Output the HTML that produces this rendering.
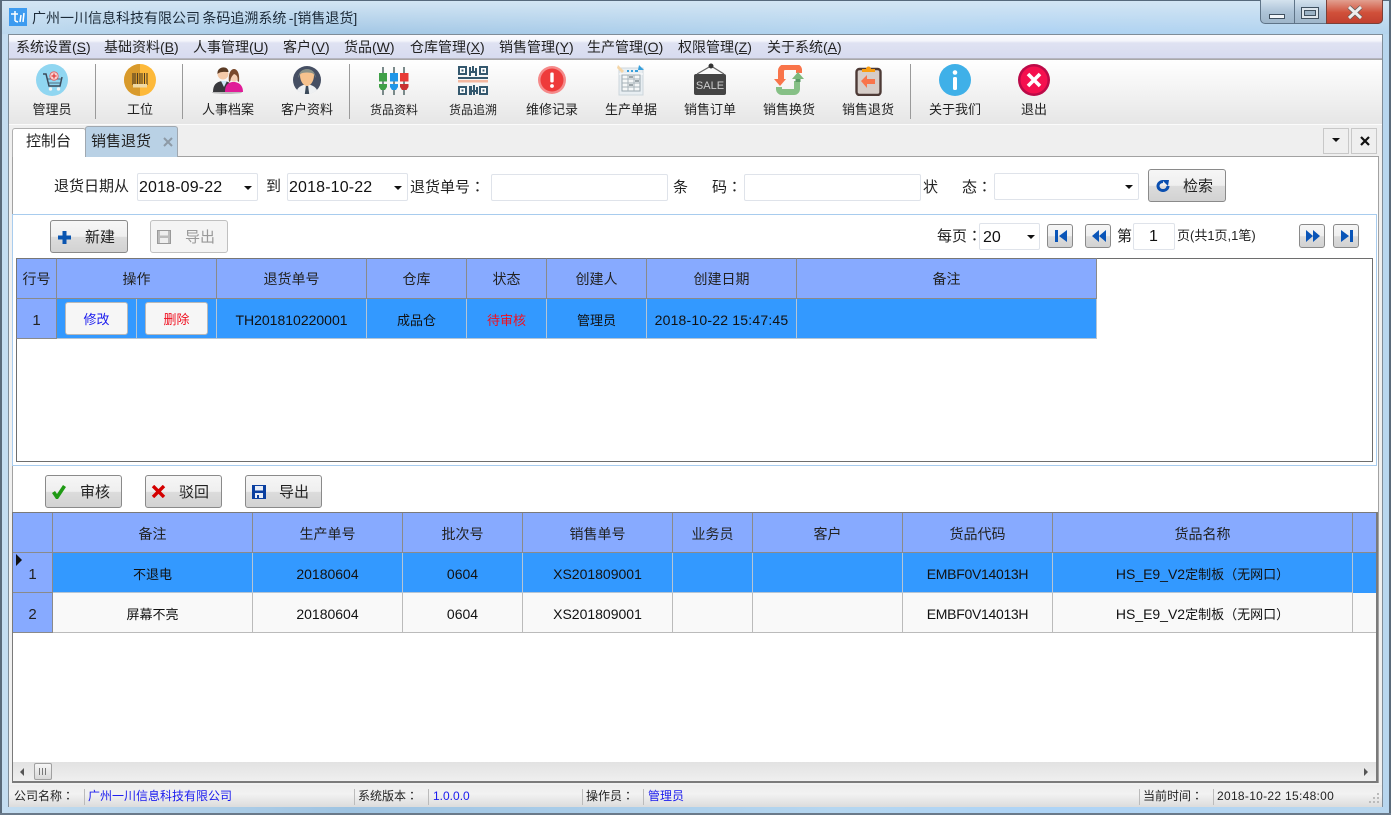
<!DOCTYPE html>
<html lang="zh-CN"><head><meta charset="utf-8"><title>销售退货</title>
<style>
html,body{margin:0;padding:0}
body{width:1391px;height:815px;overflow:hidden;position:relative;background:#b4d4ee;font-family:"Liberation Sans","Noto Sans CJK SC",sans-serif;font-size:14px;color:#111}
div,svg{position:absolute;box-sizing:border-box}
.q{font-family:"Noto Sans CJK TC",sans-serif;line-height:0}
.t{white-space:nowrap;line-height:20px;height:20px}
.c{text-align:center}
.f15{font-size:15px}
.m{font-size:14px;top:37px;color:#222}
.m u{text-decoration:underline}
.lb{top:100px;font-size:13px;width:80px;text-align:center;color:#222}
.sep{width:1px;top:64px;height:55px;background:#9a9a9a}
.inp{background:#fff;border:1px solid #dfe3ea;border-radius:2px}
.arr{width:0;height:0;border-left:4px solid transparent;border-right:4px solid transparent;border-top:4px solid #111}
.btn{border:1px solid #8a8a8a;border-radius:3px;background:linear-gradient(#f6f6f6 0,#efefef 50%,#dcdcdc 52%,#d2d2d2 100%)}
.btn.dis{border-color:#c0c0c0;background:#f4f4f4}
.cell{border-right:1px solid #8a8a8a;border-bottom:1px solid #8a8a8a;text-align:center;line-height:43px;font-size:14px;white-space:nowrap}
.h{background:#87aaff;color:#222}
.gh{line-height:41px;border-top:1px solid #777}
.s{background:#3399ff;border-right-color:#b5c5d5;border-bottom-color:#b5c5d5}
.w{background:#f9f9f9;border-right-color:#bbb;border-bottom-color:#bbb}
.z{font-size:13px}
.st{top:786px;font-size:12px;color:#222}
.stb{color:#1a1aee}
.sd{top:789px;width:1px;height:16px;background:#bbb}
</style></head><body>

<!-- window frame -->
<div style="left:0;top:0;width:1391px;height:815px;background:linear-gradient(90deg,#c4ddf0 0,#9fc4e2 25%,#b5d6f0 60%,#aed4f6 75%,#b8d6ee 100%)"></div>
<div style="left:0;top:0;width:1391px;height:34px;background:linear-gradient(#d4e6f4,rgba(170,205,235,0.3))"></div>
<div style="left:0;top:0;width:2px;height:815px;background:#5a6a7a"></div>
<div style="left:1389px;top:0;width:2px;height:815px;background:#5a6a7a"></div>
<div style="left:0;top:813px;width:1391px;height:2px;background:#6a7a8a"></div>
<div style="left:0;top:0;width:1391px;height:1px;background:#56697c"></div>

<!-- app icon + title -->
<div style="left:9px;top:8px;width:18px;height:18px;background:#3d9bf0"></div>
<svg style="left:9px;top:8px" width="18" height="18" viewBox="0 0 18 18"><path d="M2 6h7M6 3v10M6 13l3 1M12 7l-1 7M15 5l-1 9" stroke="#fff" stroke-width="1.500" fill="none"/></svg>
<div class="t" style="left:32px;top:8px;font-size:14px;color:#1c2a38;word-spacing:-1.500px">广州一川信息科技有限公司 条码追溯系统 -[销售退货]</div>

<!-- window buttons -->
<div style="left:1260px;top:0;width:123px;height:24px;border:1px solid #5f7488;border-top:0;border-radius:0 0 5px 5px;background:linear-gradient(#d4e2ee,#aec4d8 50%,#9fb6ca)"></div>
<div style="left:1294px;top:0;width:1px;height:23px;background:#5f7488"></div>
<div style="left:1326px;top:0;width:57px;height:24px;border:1px solid #7a4038;border-top:0;border-radius:0 0 5px 0;background:linear-gradient(#e2a090,#d0503a 55%,#c24030)"></div>
<div style="left:1269px;top:14px;width:16px;height:5px;background:#f2f6fa;border:1px solid #3f5060"></div>
<div style="left:1301px;top:7px;width:18px;height:12px;background:#dde6ee;border:1px solid #3f5060"></div>
<div style="left:1304px;top:10px;width:12px;height:6px;background:#9ab2c6;border:1px solid #3f5060"></div>
<svg style="left:1346px;top:5px" width="18" height="15" viewBox="0 0 18 15"><path d="M3 2l12 11M15 2L3 13" stroke="#5a5a5a" stroke-width="4.500"/><path d="M3 2l12 11M15 2L3 13" stroke="#eeeeee" stroke-width="3"/></svg>

<!-- client -->
<div style="left:8px;top:34px;width:1375px;height:773px;background:#f0f0f0;border:1px solid #7f8c98;border-bottom:0"></div>

<!-- menu -->
<div style="left:9px;top:35px;width:1373px;height:24px;background:linear-gradient(#fbfbfe 0,#f4f5fb 25%,#dfe2f2 35%,#d7dbef 100%);border-bottom:1px solid #b5b5c0"></div>
<div class="t m" style="left:16px">系统设置(<u>S</u>)</div>
<div class="t m" style="left:104px">基础资料(<u>B</u>)</div>
<div class="t m" style="left:193px">人事管理(<u>U</u>)</div>
<div class="t m" style="left:283px">客户(<u>V</u>)</div>
<div class="t m" style="left:344px">货品(<u>W</u>)</div>
<div class="t m" style="left:410px">仓库管理(<u>X</u>)</div>
<div class="t m" style="left:499px">销售管理(<u>Y</u>)</div>
<div class="t m" style="left:587px">生产管理(<u>O</u>)</div>
<div class="t m" style="left:678px">权限管理(<u>Z</u>)</div>
<div class="t m" style="left:767px">关于系统(<u>A</u>)</div>

<!-- toolbar -->
<div style="left:9px;top:59px;width:1373px;height:66px;background:linear-gradient(#fff,#f5f5f5 40%,#e6e6e6);border-top:1px solid #a8a8a8;border-bottom:1px solid #fbfbfb"></div>
<div class="sep" style="left:95px"></div><div class="sep" style="left:182px"></div><div class="sep" style="left:349px"></div><div class="sep" style="left:910px"></div>

<svg style="left:36px;top:64px" width="32" height="32" viewBox="0 0 32 32"><circle cx="16" cy="16" r="16" fill="#90d6f1"/><path d="M7 10h3l3 12h11l2-9" fill="none" stroke="#3b4a5a" stroke-width="1.500"/><path d="M11.500 15h14M12.500 19h12" stroke="#3b4a5a" stroke-width="0.800"/><circle cx="18" cy="12" r="4.200" fill="#f6d4d4" stroke="#e65a5a" stroke-width="0.800"/><path d="M15.500 12h5M18 9.500v5" stroke="#e03c3c" stroke-width="1.300"/><circle cx="14.500" cy="25" r="1.700" fill="#f2f2f2"/><circle cx="22.500" cy="25" r="1.700" fill="#f2f2f2"/></svg>
<svg style="left:124px;top:64px" width="32" height="32" viewBox="0 0 32 32"><circle cx="16" cy="16" r="16" fill="#fdb93a"/><path d="M16 0a16 16 0 0 0 0 32z" fill="#d89a2c"/><path d="M9 9v12M11 9v12M13.500 9v12M16 9v12M18 9v12M20.500 9v12M23 9v12" stroke="#4e3c22" stroke-width="1.100"/><rect x="9" y="20" width="14" height="3.500" fill="#efd9a5"/></svg>
<svg style="left:212px;top:66px" width="32" height="28" viewBox="0 0 32 28"><ellipse cx="15" cy="26.500" rx="15" ry="1.500" fill="#bbb"/><path d="M1 26c0-7 3-10 9-11h3c5 1 8 4 9 11z" fill="#39393d"/><path d="M9 15l3 6 3-6z" fill="#cfe6f6"/><circle cx="11" cy="8" r="5.500" fill="#f4c9a8"/><path d="M5.500 8c-1-8 11-9 11-2-3 0-8-1-11 2z" fill="#5b3b24"/><path d="M13 26c0-6 2-9 7-10h3c5 1 8 4 8 10z" fill="#e01c98"/><ellipse cx="22" cy="10.500" rx="4.300" ry="5.200" fill="#f6d0b4"/><path d="M17 16c-1-9 2-13 5-13s6 4 5 13l-1.500-1c.5-3 0-6-3.500-7-2 2-3.500 4-3.500 7z" fill="#7a4a2c"/></svg>
<svg style="left:293px;top:66px" width="28" height="28" viewBox="0 0 28 28"><circle cx="14" cy="14" r="14" fill="#464f63"/><path d="M4 24c2-4 6-5 10-6 4 1 8 2 10 6a14 14 0 0 1-20 0z" fill="#eef0f2"/><path d="M13 19h2l1.200 9h-4.400z" fill="#3c4a5a"/><path d="M7 9c0 7 4 11 7 11s7-4 7-11c0-4-14-4-14 0z" fill="#f6c28e"/><path d="M5.500 12C5 0 23 0 22.500 12L21 8c-3-2-11-2-14 0z" fill="#8a9188"/></svg>
<svg style="left:378px;top:65px" width="32" height="30" viewBox="0 0 32 30"><g fill="none" stroke="#7a8a8a" stroke-width="2"><path d="M5 2v28M16 2v28M26 2v28"/></g><rect x="1" y="8" width="8" height="8.500" fill="#3fa047"/><rect x="12" y="8" width="8" height="8.500" fill="#1e96e8"/><rect x="22" y="8" width="8.500" height="8.500" fill="#e83a36"/><path d="M1 19h8v3l-2 3H3l-2-3z" fill="#3fa047"/><path d="M12 19h8v3l-2 3h-4l-2-3z" fill="#1e96e8"/><path d="M22 19h8.500v3l-2 3h-4.500l-2-3z" fill="#c93230"/></svg>
<svg style="left:458px;top:66px" width="30" height="29" viewBox="0 0 30 29"><g fill="#34586e"><path d="M0 0h9v9H0zM21 0h9v9h-9zM0 20h9v9H0zM21 20h9v9h-9z"/><path d="M11 1h2v9h-2zM14 0h2v5h-2zM17 2h2v8h-2zM12 5h6v2h-6zM0 11h30v2H0zM11 20h3v9h-3zM15 19h2v10h-2zM18 21h2v7h-2zM12 24h6v2h-6z"/></g><path d="M2 2h5v5H2zM23 2h5v5h-5zM2 22h5v5H2zM23 22h5v5h-5z" fill="#fff"/><path d="M0 14h30v2.500H0z" fill="#f4b8a0"/><path d="M3.500 3.500h2v2h-2zM24.500 3.500h2v2h-2zM3.500 23.500h2v2h-2zM24.500 23.500h2v2h-2z" fill="#34586e"/></svg>
<svg style="left:538px;top:66px" width="28" height="28" viewBox="0 0 28 28"><circle cx="14" cy="14" r="14" fill="#f58a8a"/><circle cx="14" cy="14" r="11.500" fill="#ee3b3b"/><rect x="12.300" y="6.500" width="3.400" height="10" rx="1.200" fill="#fff"/><circle cx="14" cy="20" r="1.900" fill="#fff"/></svg>
<svg style="left:617px;top:64px" width="28" height="32" viewBox="0 0 28 32"><rect x="2" y="4" width="24" height="27" fill="#e8eef2" stroke="#cdd6dc"/><path d="M2 10h24" stroke="#fff"/><rect x="5" y="11" width="18" height="16" fill="#f6f8f8" stroke="#9aa8b0"/><path d="M5 15h18M5 19h18M5 23h18M11 11v16M17 11v16" stroke="#a8b4ba"/><path d="M12 13h4M12 21h4M18 17h4" stroke="#68757c" stroke-width="1.200"/><path d="M1 1l6 6-2 2-5-5z" fill="#f4d6a8"/><path d="M10 7h2M14 7h2M18 7h3" stroke="#38a0dc" stroke-width="2"/><path d="M22 1l5 5-6 0z" fill="#38a0dc"/></svg>
<svg style="left:694px;top:63px" width="32" height="33" viewBox="0 0 32 33"><rect x="0" y="11" width="32" height="21" rx="2" fill="#444"/><path d="M3 11L17 3l13 8" fill="none" stroke="#666" stroke-width="1.200"/><circle cx="17" cy="3" r="2.500" fill="#333"/><text x="16" y="26" font-family="Liberation Sans,sans-serif" font-size="11" fill="#ccc" text-anchor="middle">SALE</text></svg>
<svg style="left:774px;top:65px" width="30" height="30" viewBox="0 0 30 30"><path d="M7 14V6a4 4 0 0 1 4-4h11a3 3 0 0 1 3 3v3" fill="none" stroke="#f9744a" stroke-width="6"/><path d="M23 16v8a3 3 0 0 1-3 3H8a3 3 0 0 1-3-3v-2" fill="none" stroke="#86c086" stroke-width="6"/><path d="M0 14h12l-6 7z" fill="#f9744a"/><path d="M18 14h12l-6-7z" fill="#7cb87c"/><rect x="21.500" y="14" width="5" height="3" fill="#5a9a64"/></svg>
<svg style="left:855px;top:64px" width="27" height="32" viewBox="0 0 27 32"><rect x="1.500" y="5" width="24" height="26" rx="3" fill="#d6cdc8" stroke="#4d3a36" stroke-width="2.400"/><path d="M7 8V5h4a2.500 2.500 0 0 1 5 0h4v3z" fill="#fa9e10"/><path d="M6 17l6-6v4h8v5h-8v4z" fill="#f9744a"/></svg>
<svg style="left:939px;top:64px" width="32" height="32" viewBox="0 0 32 32"><circle cx="16" cy="16" r="16" fill="#3fb0e8"/><circle cx="16" cy="8.500" r="2.300" fill="#fff"/><rect x="14" y="13" width="4" height="13" rx="1.500" fill="#fff"/></svg>
<svg style="left:1018px;top:64px" width="32" height="32" viewBox="0 0 32 32"><circle cx="16" cy="16" r="16" fill="#bb0a48"/><circle cx="16" cy="16" r="13.500" fill="#f5104f"/><path d="M10 10l12 12M22 10L10 22" stroke="#fff" stroke-width="3.600"/></svg>

<div class="t lb" style="left:12px">管理员</div>
<div class="t lb" style="left:100px">工位</div>
<div class="t lb" style="left:188px">人事档案</div>
<div class="t lb" style="left:267px">客户资料</div>
<div class="t lb" style="left:354px;font-size:12px">货品资料</div>
<div class="t lb" style="left:433px;font-size:12px">货品追溯</div>
<div class="t lb" style="left:512px">维修记录</div>
<div class="t lb" style="left:591px">生产单据</div>
<div class="t lb" style="left:670px">销售订单</div>
<div class="t lb" style="left:749px">销售换货</div>
<div class="t lb" style="left:828px">销售退货</div>
<div class="t lb" style="left:915px">关于我们</div>
<div class="t lb" style="left:994px">退出</div>

<!-- tabs -->
<div style="left:9px;top:125px;width:1373px;height:32px;background:#efefef"></div>
<div style="left:12px;top:156px;width:1367px;height:627px;background:#fff;border:1px solid #a2a2a2"></div>
<div style="left:12px;top:128px;width:74px;height:29px;background:#fff;border:1px solid #b0b0b0;border-bottom:0;border-radius:3px 3px 0 0"></div>
<div class="t f15" style="left:26px;top:132px;color:#222">控制台</div>
<div style="left:85px;top:126px;width:93px;height:31px;background:#b9d1e5;border:1px solid #a0a8b0;border-bottom:0;border-radius:3px 3px 0 0"></div>
<div class="t f15" style="left:91px;top:132px;color:#222">销售退货</div>
<svg style="left:163px;top:137px" width="10" height="10" viewBox="0 0 10 10"><path d="M1 1l8 8M9 1L1 9" stroke="#8d9aa6" stroke-width="2"/></svg>
<div style="left:1323px;top:128px;width:26px;height:26px;border:1px solid #c8c8c8"></div>
<div class="arr" style="left:1332px;top:138px"></div>
<div style="left:1351px;top:128px;width:26px;height:26px;border:1px solid #c8c8c8"></div>
<svg style="left:1360px;top:136px" width="10" height="10" viewBox="0 0 10 10"><path d="M1 1l8 8M9 1L1 9" stroke="#111" stroke-width="2.200"/></svg>

<!-- search row -->
<div class="t f15" style="left:54px;top:177px;color:#222">退货日期从</div>
<div class="inp" style="left:137px;top:173px;width:121px;height:28px"></div>
<div class="t" style="left:139px;top:178px;font-size:16px;letter-spacing:.15px">2018-09-22</div>
<div class="arr" style="left:244px;top:186px"></div>
<div class="t f15" style="left:266px;top:177px;color:#222">到</div>
<div class="inp" style="left:287px;top:173px;width:121px;height:28px"></div>
<div class="t" style="left:289px;top:178px;font-size:16px;letter-spacing:.15px">2018-10-22</div>
<div class="arr" style="left:394px;top:186px"></div>
<div class="t f15" style="left:410px;top:178px;color:#222">退货单号<span class="q" lang="zh-TW">：</span></div>
<div class="inp" style="left:491px;top:174px;width:177px;height:27px"></div>
<div class="t f15" style="left:673px;top:178px;color:#222">条</div>
<div class="t f15" style="left:712px;top:178px;color:#222">码<span class="q" lang="zh-TW">：</span></div>
<div class="inp" style="left:744px;top:174px;width:177px;height:27px"></div>
<div class="t f15" style="left:923px;top:178px;color:#222">状</div>
<div class="t f15" style="left:962px;top:178px;color:#222">态<span class="q" lang="zh-TW">：</span></div>
<div class="inp" style="left:994px;top:173px;width:145px;height:27px"></div>
<div class="arr" style="left:1125px;top:185px"></div>
<div class="btn" style="left:1148px;top:169px;width:78px;height:33px"></div>
<svg style="left:1155px;top:180px" width="15" height="12" viewBox="0 0 15 12"><path d="M13 6A5 4.500 0 1 1 8 1.500" fill="none" stroke="#0a4fb0" stroke-width="3"/><path d="M7 0l7 0-1 6z" fill="#0a4fb0"/></svg>
<div class="t f15" style="left:1183px;top:177px;color:#222">检索</div>

<!-- group 1 -->
<div style="left:12px;top:214px;width:1365px;height:252px;border:1px solid #a8ccee"></div>
<div class="btn" style="left:50px;top:220px;width:78px;height:33px"></div>
<svg style="left:58px;top:231px" width="13" height="13" viewBox="0 0 13 13"><path d="M4.500 0h4v4.500H13v4H8.500V13h-4V8.500H0v-4h4.500z" fill="#0a55b0"/></svg>
<div class="t f15" style="left:85px;top:228px;color:#222">新建</div>
<div class="btn dis" style="left:150px;top:220px;width:78px;height:33px"></div>
<svg style="left:157px;top:230px" width="14" height="14" viewBox="0 0 14 14"><rect x=".5" y=".5" width="13" height="13" fill="#bbb" stroke="#999"/><rect x="3" y="1" width="8" height="4.500" fill="#eee"/><rect x="3" y="8" width="8" height="5" fill="#eee"/></svg>
<div class="t f15" style="left:185px;top:228px;color:#999">导出</div>

<div class="t f15" style="left:937px;top:227px;color:#222">每页<span class="q" lang="zh-TW">：</span></div>
<div class="inp" style="left:979px;top:223px;width:61px;height:27px"></div>
<div class="t" style="left:983px;top:228px;font-size:16px">20</div>
<div class="arr" style="left:1027px;top:235px"></div>
<div class="btn" style="left:1047px;top:224px;width:26px;height:24px"></div>
<svg style="left:1055px;top:230px" width="12" height="12" viewBox="0 0 12 12"><path d="M0 0h3v12H0zM12 0v12L4 6z" fill="#0a55b8"/></svg>
<div class="btn" style="left:1085px;top:224px;width:26px;height:24px"></div>
<svg style="left:1092px;top:230px" width="14" height="12" viewBox="0 0 14 12"><path d="M7 0v12L0 6zM14 0v12L7 6z" fill="#0a55b8"/></svg>
<div class="t f15" style="left:1117px;top:227px;color:#222">第</div>
<div class="inp" style="left:1133px;top:223px;width:42px;height:27px"></div>
<div class="t c" style="left:1133px;top:227px;width:41px;font-size:16px">1</div>
<div class="t" style="left:1177px;top:226px;font-size:13px;color:#222">页(共1页,1笔)</div>
<div class="btn" style="left:1299px;top:224px;width:26px;height:24px"></div>
<svg style="left:1306px;top:230px" width="14" height="12" viewBox="0 0 14 12"><path d="M0 0v12l7-6zM7 0v12l7-6z" fill="#0a55b8"/></svg>
<div class="btn" style="left:1333px;top:224px;width:26px;height:24px"></div>
<svg style="left:1341px;top:230px" width="12" height="12" viewBox="0 0 12 12"><path d="M0 0v12l8-6zM9 0h3v12H9z" fill="#0a55b8"/></svg>

<!-- grid 1 -->
<div style="left:16px;top:258px;width:1357px;height:204px;background:#fff;border:1px solid #6e6e6e"></div>
<div class="cell h gh" style="left:16px;top:258px;width:41px;height:41px;border-left:1px solid #777">行号</div>
<div class="cell h gh" style="left:57px;top:258px;width:160px;height:41px">操作</div>
<div class="cell h gh" style="left:217px;top:258px;width:150px;height:41px">退货单号</div>
<div class="cell h gh" style="left:367px;top:258px;width:100px;height:41px">仓库</div>
<div class="cell h gh" style="left:467px;top:258px;width:80px;height:41px">状态</div>
<div class="cell h gh" style="left:547px;top:258px;width:100px;height:41px">创建人</div>
<div class="cell h gh" style="left:647px;top:258px;width:150px;height:41px">创建日期</div>
<div class="cell h gh" style="left:797px;top:258px;width:300px;height:41px">备注</div>

<div class="cell h" style="left:16px;top:299px;width:41px;height:40px;border-left:1px solid #777;font-size:15px">1</div>
<div class="cell s" style="left:57px;top:299px;width:80px;height:40px"></div>
<div class="cell s" style="left:137px;top:299px;width:80px;height:40px"></div>
<div style="left:65px;top:302px;width:63px;height:33px;background:#f6f6f6;border:1px solid #b8b8b8;border-radius:3px;text-align:center;line-height:33px;font-size:13px;color:#1a1aee">修改</div>
<div style="left:145px;top:302px;width:63px;height:33px;background:#f6f6f6;border:1px solid #b8b8b8;border-radius:3px;text-align:center;line-height:33px;font-size:13px;color:#f01020">删除</div>
<div class="cell s" style="left:217px;top:299px;width:150px;height:40px">TH201810220001</div>
<div class="cell s z" style="left:367px;top:299px;width:100px;height:40px">成品仓</div>
<div class="cell s z" style="left:467px;top:299px;width:80px;height:40px;color:#f01020">待审核</div>
<div class="cell s z" style="left:547px;top:299px;width:100px;height:40px">管理员</div>
<div class="cell s" style="left:647px;top:299px;width:150px;height:40px;letter-spacing:.2px">2018-10-22 15:47:45</div>
<div class="cell s" style="left:797px;top:299px;width:300px;height:40px"></div>

<!-- buttons 2 -->
<div class="btn" style="left:45px;top:475px;width:77px;height:33px"></div>
<svg style="left:51px;top:485px" width="15" height="14" viewBox="0 0 15 14"><path d="M1 8l3-2 2 3 6-9 3 2-8 12H5z" fill="#1f9a14"/></svg>
<div class="t f15" style="left:80px;top:483px;color:#222">审核</div>
<div class="btn" style="left:145px;top:475px;width:77px;height:33px"></div>
<svg style="left:151px;top:485px" width="15" height="13" viewBox="0 0 15 13"><path d="M2 1l11 11M13 1L2 12" stroke="#d40000" stroke-width="3.400"/></svg>
<div class="t f15" style="left:179px;top:483px;color:#222">驳回</div>
<div class="btn" style="left:245px;top:475px;width:77px;height:33px"></div>
<svg style="left:252px;top:485px" width="14" height="14" viewBox="0 0 14 14"><rect width="14" height="14" fill="#0a3fa0"/><rect x="3" y="1" width="8" height="4.500" fill="#e8eef8"/><rect x="3" y="8" width="8" height="5" fill="#e8eef8"/><rect x="5" y="10" width="2" height="3" fill="#0a3fa0"/></svg>
<div class="t f15" style="left:279px;top:483px;color:#222">导出</div>

<!-- grid 2 -->
<div style="left:12px;top:512px;width:1366px;height:271px;background:#fff;border:1px solid #7a7a7a;border-width:1px 2px 2px 1px"></div>
<div class="cell h" style="left:13px;top:513px;width:40px;height:40px"></div>
<div class="cell h" style="left:53px;top:513px;width:200px;height:40px">备注</div>
<div class="cell h" style="left:253px;top:513px;width:150px;height:40px">生产单号</div>
<div class="cell h" style="left:403px;top:513px;width:120px;height:40px">批次号</div>
<div class="cell h" style="left:523px;top:513px;width:150px;height:40px">销售单号</div>
<div class="cell h" style="left:673px;top:513px;width:80px;height:40px">业务员</div>
<div class="cell h" style="left:753px;top:513px;width:150px;height:40px">客户</div>
<div class="cell h" style="left:903px;top:513px;width:150px;height:40px">货品代码</div>
<div class="cell h" style="left:1053px;top:513px;width:300px;height:40px">货品名称</div>
<div class="h" style="left:1353px;top:513px;width:23px;height:40px;border-bottom:1px solid #8a8a8a"></div>

<div class="cell h" style="left:13px;top:553px;width:40px;height:40px;font-size:15px">1</div>
<div style="left:16px;top:554px;width:0;height:0;border-top:6px solid transparent;border-bottom:6px solid transparent;border-left:6px solid #111"></div>
<div class="cell s z" style="left:53px;top:553px;width:200px;height:40px">不退电</div>
<div class="cell s" style="left:253px;top:553px;width:150px;height:40px">20180604</div>
<div class="cell s" style="left:403px;top:553px;width:120px;height:40px">0604</div>
<div class="cell s" style="left:523px;top:553px;width:150px;height:40px">XS201809001</div>
<div class="cell s" style="left:673px;top:553px;width:80px;height:40px"></div>
<div class="cell s" style="left:753px;top:553px;width:150px;height:40px"></div>
<div class="cell s" style="left:903px;top:553px;width:150px;height:40px;letter-spacing:-.3px">EMBF0V14013H</div>
<div class="cell s" style="left:1053px;top:553px;width:300px;height:40px">HS_E9_V2<span class="z">定制板</span><span class="z q" lang="zh-TW">（</span><span class="z">无网口</span><span class="z q" lang="zh-TW">）</span></div>
<div class="s" style="left:1353px;top:553px;width:23px;height:40px"></div>

<div class="cell h" style="left:13px;top:593px;width:40px;height:40px;font-size:15px">2</div>
<div class="cell w z" style="left:53px;top:593px;width:200px;height:40px">屏幕不亮</div>
<div class="cell w" style="left:253px;top:593px;width:150px;height:40px">20180604</div>
<div class="cell w" style="left:403px;top:593px;width:120px;height:40px">0604</div>
<div class="cell w" style="left:523px;top:593px;width:150px;height:40px">XS201809001</div>
<div class="cell w" style="left:673px;top:593px;width:80px;height:40px"></div>
<div class="cell w" style="left:753px;top:593px;width:150px;height:40px"></div>
<div class="cell w" style="left:903px;top:593px;width:150px;height:40px;letter-spacing:-.3px">EMBF0V14013H</div>
<div class="cell w" style="left:1053px;top:593px;width:300px;height:40px">HS_E9_V2<span class="z">定制板</span><span class="z q" lang="zh-TW">（</span><span class="z">无网口</span><span class="z q" lang="zh-TW">）</span></div>
<div class="w" style="left:1353px;top:593px;width:23px;height:40px;border-bottom:1px solid #bbb"></div>

<!-- scrollbar -->
<div style="left:13px;top:762px;width:1363px;height:19px;background:linear-gradient(#e2e2e2,#efefef)"></div>
<div style="left:20px;top:768px;width:0;height:0;border-top:4px solid transparent;border-bottom:4px solid transparent;border-right:4px solid #555"></div>
<div style="left:1364px;top:768px;width:0;height:0;border-top:4px solid transparent;border-bottom:4px solid transparent;border-left:4px solid #555"></div>
<div style="left:34px;top:763px;width:18px;height:17px;background:linear-gradient(#f6f6f6,#d8d8d8);border:1px solid #a0a0a0;border-radius:2px"></div>
<div style="left:39px;top:768px;width:7px;height:7px;background:repeating-linear-gradient(90deg,#777 0,#777 1px,transparent 1px,transparent 3px)"></div>

<!-- status bar -->
<div style="left:9px;top:785px;width:1373px;height:22px;background:linear-gradient(#ececec,#f2f2f2 40%,#dcdcdc)"></div>
<div class="t st" style="left:14px">公司名称<span class="q" lang="zh-TW">：</span></div>
<div class="sd" style="left:84px"></div>
<div class="t st stb" style="left:88px">广州一川信息科技有限公司</div>
<div class="sd" style="left:354px"></div>
<div class="t st" style="left:358px">系统版本<span class="q" lang="zh-TW">：</span></div>
<div class="sd" style="left:428px"></div>
<div class="t st stb" style="left:433px">1.0.0.0</div>
<div class="sd" style="left:582px"></div>
<div class="t st" style="left:586px">操作员<span class="q" lang="zh-TW">：</span></div>
<div class="sd" style="left:643px"></div>
<div class="t st stb" style="left:648px">管理员</div>
<div class="sd" style="left:1139px"></div>
<div class="t st" style="left:1143px">当前时间<span class="q" lang="zh-TW">：</span></div>
<div class="sd" style="left:1213px"></div>
<div class="t st" style="left:1217px;letter-spacing:.3px">2018-10-22 15:48:00</div>
<svg style="left:1368px;top:792px" width="12" height="12" viewBox="0 0 12 12"><g fill="#bbb"><rect x="9" y="1" width="2" height="2"/><rect x="5" y="5" width="2" height="2"/><rect x="9" y="5" width="2" height="2"/><rect x="1" y="9" width="2" height="2"/><rect x="5" y="9" width="2" height="2"/><rect x="9" y="9" width="2" height="2"/></g></svg>

</body></html>
